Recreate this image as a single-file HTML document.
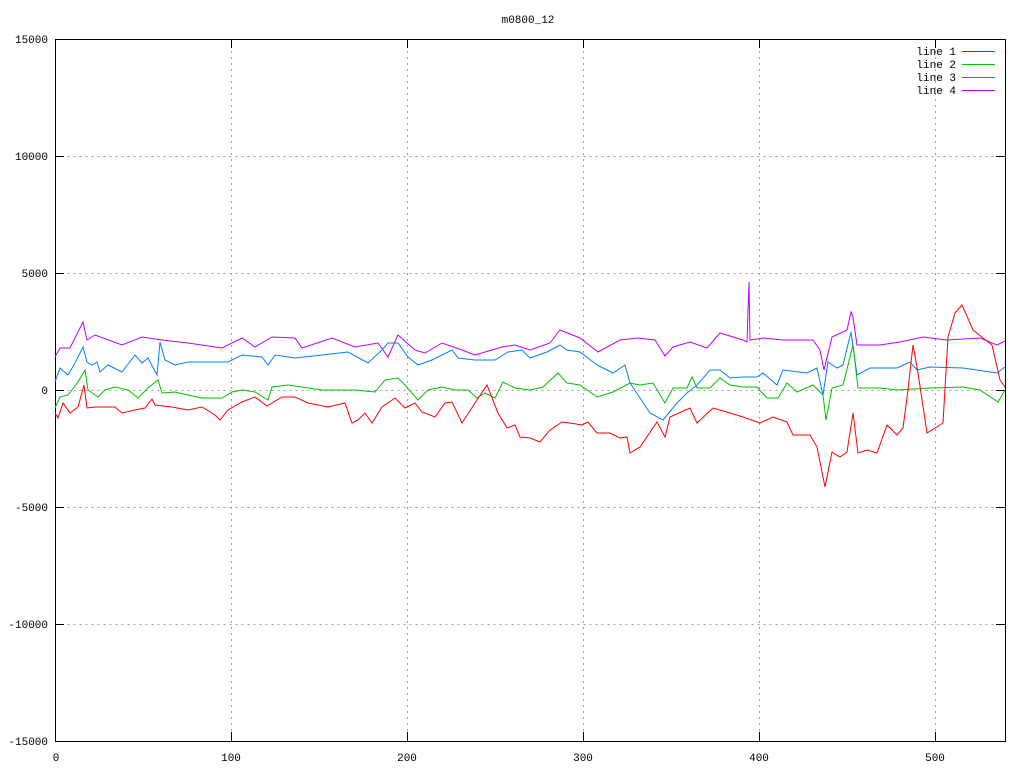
<!DOCTYPE html>
<html><head><meta charset="utf-8"><style>
html,body{margin:0;padding:0;background:#fff;}
svg{display:block;}
text{font-family:"Liberation Mono","DejaVu Sans Mono",monospace;font-size:11px;fill:#000;}
</style></head><body>
<svg width="1024" height="768" viewBox="0 0 1024 768" xmlns="http://www.w3.org/2000/svg">
<rect width="1024" height="768" fill="#fff"/>
<g stroke="#a0a0a0" stroke-width="1" stroke-dasharray="2,4" fill="none">
<path d="M55.5 39.5H1005M55.5 156.5H1005M55.5 273.5H1005M55.5 390.5H1005M55.5 507.5H1005M55.5 624.5H1005"/>
<path d="M231.5 39V741M407.5 39V741M583.5 39V741M759.5 39V741M935.5 39V741"/>
</g>
<g stroke="#000" stroke-width="1" fill="none">
<rect x="55.5" y="39.5" width="950" height="702"/>
<path d="M55 39.5h9M55 156.5h9M55 273.5h9M55 390.5h9M55 507.5h9M55 624.5h9M55 741.5h9"/>
<path d="M1005 39.5h-9M1005 156.5h-9M1005 273.5h-9M1005 390.5h-9M1005 507.5h-9M1005 624.5h-9M1005 741.5h-9"/>
<path d="M55.5 741v-9M231.5 741v-9M407.5 741v-9M583.5 741v-9M759.5 741v-9M935.5 741v-9"/>
<path d="M55.5 39v9M231.5 39v9M407.5 39v9M583.5 39v9M759.5 39v9M935.5 39v9"/>
</g>
<g text-anchor="end">
<text x="48" y="43">15000</text><text x="48" y="160">10000</text><text x="48" y="277">5000</text>
<text x="48" y="394">0</text><text x="48" y="511">-5000</text><text x="48" y="628">-10000</text><text x="48" y="745">-15000</text>
</g>
<g text-anchor="middle">
<text x="56" y="761">0</text><text x="231" y="761">100</text><text x="407" y="761">200</text>
<text x="583" y="761">300</text><text x="759" y="761">400</text><text x="935" y="761">500</text>
<text x="528" y="23">m0800_12</text>
</g>
<g text-anchor="end">
<text x="956" y="55">line 1</text><text x="956" y="68">line 2</text><text x="956" y="81">line 3</text><text x="956" y="94">line 4</text>
</g>
<g fill="none" stroke-width="1">
<path stroke="#ff0000" d="M962 51.5h33"/>
<path stroke="#00c000" d="M962 64.5h33"/>
<path stroke="#0080ff" d="M962 77.5h33"/>
<path stroke="#c000ff" d="M962 90.5h33"/>
<polyline stroke="#c000ff" points="55,357 60,348 70,348 75,338 83,322 87,340 95,335 122,345 142,337 162,340 188,343 222,348 242,338 255,347 272,337 295,338 302,348 332,338 355,347 378,343 388,357 398,335 415,350 425,353 442,343 462,350 475,355 502,347 515,345 530,350 550,343 560,330 580,338 598,352 620,340 637,338 655,340 665,356 673,347 690,342 707,348 720,333 743,340 747,342 749,282 750,340 763,338 783,340 813,340 820,350 824,370 832,337 847,330 851,312 853,317 857,345 880,345 900,342 923,337 947,340 980,338 997,345 1005,341"/>
<polyline stroke="#0080ff" points="55,382 60,368 68,375 75,363 83,347 87,362 92,365 97,362 100,372 108,365 122,372 135,355 142,363 148,358 157,375 160,342 165,360 175,365 188,362 205,362 228,362 242,355 262,357 268,365 275,355 295,358 322,355 348,352 368,363 382,350 388,343 398,343 408,357 418,365 432,360 452,350 458,358 475,360 495,360 508,352 522,350 530,358 547,352 560,345 567,350 580,352 597,365 613,373 625,365 630,383 650,413 663,420 677,403 687,393 697,385 710,370 720,370 730,378 743,377 757,377 763,373 777,385 783,370 807,373 817,368 823,395 828,362 837,368 843,365 851,332 857,375 870,368 897,368 910,362 917,370 930,367 963,368 997,373 1005,367"/>
<polyline stroke="#00c000" points="55,408 60,397 68,395 78,382 85,370 88,390 98,397 105,390 115,387 128,390 138,398 148,388 158,380 162,393 175,392 188,395 202,398 222,398 232,392 242,390 255,392 268,400 272,387 288,385 322,390 355,390 375,392 385,380 398,378 405,385 418,400 428,390 442,387 455,390 468,390 477,398 485,393 495,398 503,382 515,388 530,390 543,387 558,373 567,383 580,385 597,397 613,392 630,383 640,385 653,383 665,403 673,388 687,388 692,377 697,388 710,388 720,378 730,385 743,387 757,387 767,398 778,398 787,383 797,392 813,385 823,395 826,420 832,388 843,385 853,345 858,388 880,388 897,390 930,388 963,387 980,390 998,402 1005,390"/>
<polyline stroke="#ff0000" points="55,413 58,418 63,403 70,413 78,407 84,385 87,408 95,407 115,407 122,413 135,410 145,408 152,399 155,405 172,407 188,410 202,407 215,415 220,420 228,410 242,402 255,397 267,406 282,397 295,397 308,403 328,407 345,403 352,423 358,420 365,413 372,423 382,407 395,398 405,408 415,403 422,412 435,417 445,403 452,402 462,423 475,403 487,385 498,413 507,428 515,425 520,437 530,438 540,442 550,430 562,422 570,423 582,425 588,422 597,433 610,433 620,438 627,437 630,453 640,447 657,422 665,437 670,417 690,408 697,423 713,408 730,413 743,417 760,423 773,417 787,422 793,435 810,435 817,447 825,487 832,452 840,457 847,452 853,413 858,453 867,450 877,453 887,425 897,435 903,428 908,390 913,345 918,373 927,433 943,423 948,337 955,313 962,305 973,330 992,345 1000,380 1005,387"/>
</g>
</svg>
</body></html>
